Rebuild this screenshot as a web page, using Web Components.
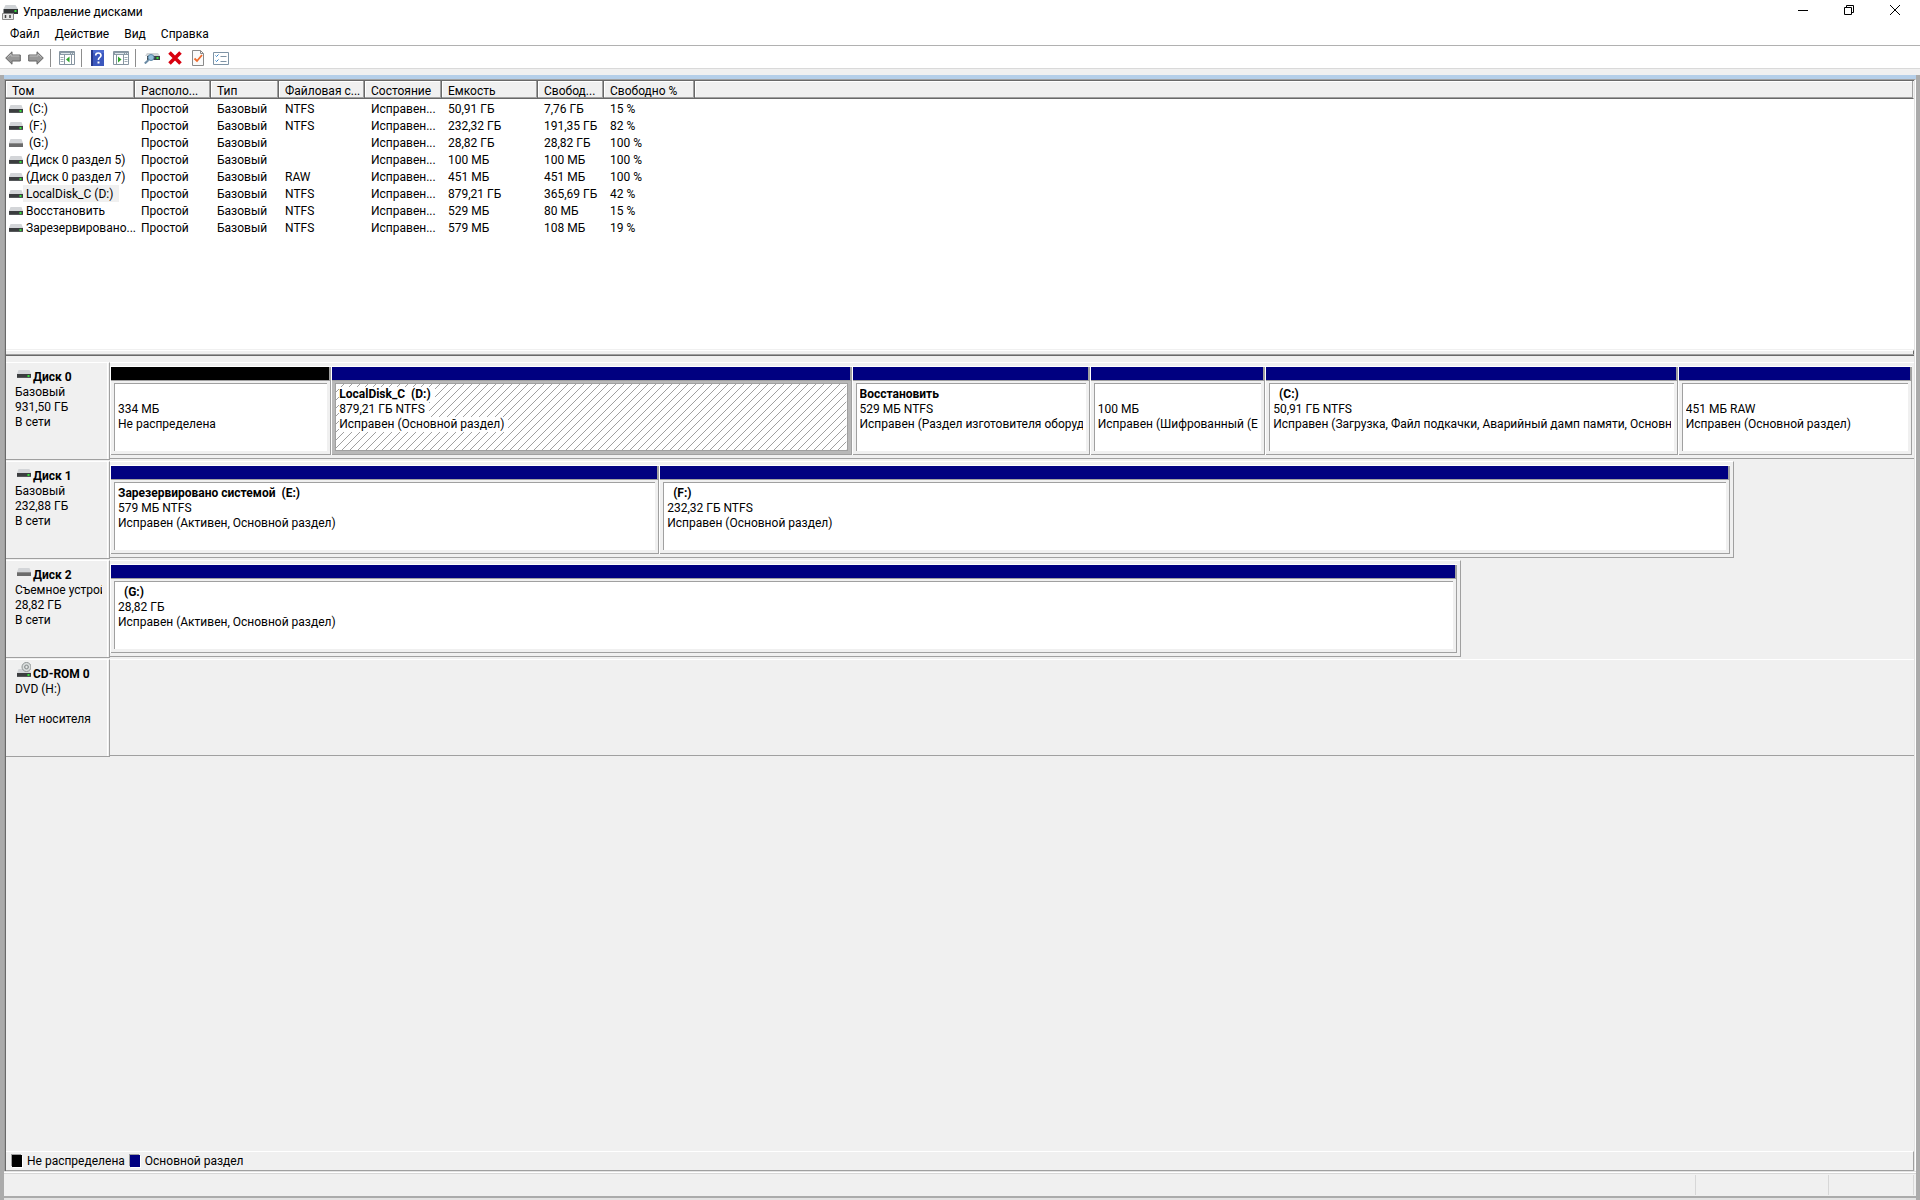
<!DOCTYPE html>
<html lang="ru">
<head>
<meta charset="utf-8">
<title>Управление дисками</title>
<style>
  html, body { margin: 0; height: 100%; }
  body { font: 12px/15px Roboto, "Open Sans", sans-serif; color: #000; background: #f0f0f0; }
</style>
</head>
<body>
<disk-manager></disk-manager>

<script>
const define = (name, html, setup) => {
  const tpl = document.createElement('template');
  tpl.innerHTML = html;
  customElements.define(name, class extends HTMLElement {
    constructor() {
      super();
      this.attachShadow({ mode: 'open' }).append(tpl.content.cloneNode(true));
    }
    connectedCallback() { if (setup) setup.call(this, this.shadowRoot); }
  });
};

/* Drive glyph: kind = hdd | removable | cd */
const driveSvg = kind => `
  <svg width="14" height="${kind === 'cd' ? 15 : 8}" viewBox="0 ${kind === 'cd' ? -7 : 0} 14 ${kind === 'cd' ? 15 : 8}" aria-hidden="true">
    <path d="M1.500 0h11L14 4H0z" fill="#d3d5d8"/>
    ${kind === 'removable'
      ? '<rect y="4" width="14" height="4" fill="#6b6b6b"/><path d="M0 4.500h14" stroke="#8d8d8d"/>'
      : '<rect y="4" width="14" height="4" fill="#3b3d3f"/><path d="M0 7.500h14" stroke="#55585a"/><path d="M10 6h3M11.500 5v2" stroke="#35e03a"/>'}
    ${kind === 'cd' ? '<circle cx="9.500" cy="-2" r="4.500" fill="#dcdfdf" stroke="#8f9494"/><circle cx="9.500" cy="-2" r="2" fill="#b9bdbd" stroke="#909595"/><circle cx="9.500" cy="-2" r=".8" fill="#fff"/>' : ''}
  </svg>`;

define('drive-icon', `<style>:host{display:block;flex:none}svg{display:block}</style><div></div>`,
  function (root) { root.querySelector('div').innerHTML = driveSvg(this.getAttribute('kind') || 'hdd'); });

define('title-bar', `
<style>
  :host { display: flex; align-items: center; height: 24px; background: #fff; padding: 0 2px 0 2px; }
  h1 { font: inherit; margin: 0 auto 0 5px; }
  button { width: 46px; height: 20px; border: 0; background: none; padding: 0; display: grid; place-items: center; align-self: flex-start; }
  svg { display: block; }
</style>
<svg width="16" height="15" viewBox="0 0 16 15" aria-hidden="true">
  <path d="M3.500 0h10L16 4H1.500z" fill="#cfd2d5"/><path d="M1.500 4H16v5H1.500z" fill="#333638"/>
  <path d="M12 6h3M13.500 5v2" stroke="#35e03a"/>
  <path d="M.5 14.500V8.500h11v6z" fill="#e7e7e7" stroke="#888"/><path d="M3.500 10v3M8 10v3" stroke="#444" stroke-width="1.500"/>
</svg>
<h1><slot></slot></h1>
<button aria-label="Свернуть"><svg width="10" height="11"><path d="M0 5.500h10" stroke="#000"/></svg></button>
<button aria-label="Восстановить окно"><svg width="10" height="10" fill="none" stroke="#000"><path d="M.5 2.500h7v7h-7zM2.500 2V.5h7v7H8"/></svg></button>
<button aria-label="Закрыть"><svg width="10" height="10" stroke="#000"><path d="M0 0l10 10M10 0L0 10"/></svg></button>
`);

define('menu-bar', `
<style>
  :host { display: block; background: #fff; border-bottom: 1px solid #b1b1b1; }
  nav { display: flex; height: 21px; align-items: center; padding-left: 3px; }
</style>
<nav><slot></slot></nav>`);

define('menu-item', `
<style>
  :host { display: block; }
  button { font: inherit; color: inherit; border: 0; background: none; padding: 0 8px 0 7px; display: block; }
</style>
<button><slot></slot></button>`);

define('tool-bar', `
<style>
  :host { display: flex; height: 20px; align-items: center; background: #fff; border-bottom: 1px solid #d9d9d9; padding: 2px 0 0 1px; }
  button { width: 23px; height: 20px; border: 0; padding: 0; background: none; display: grid; place-items: center; }
  i { width: 1px; height: 18px; background: #8d8d8d; margin: 0 4px 0 3px; }
  svg { display: block; }
</style>
<button aria-label="Назад"><svg width="16" height="14" viewBox="0 0 16 14"><path d="M.7 7L7 .8V4h8.300v6H7v3.200z" fill="#979797" stroke="#666"/><path d="M2.500 6.500L6 3v2h8.300" fill="none" stroke="#bcbcbc"/></svg></button>
<button aria-label="Вперед"><svg width="16" height="14" viewBox="0 0 16 14"><path d="M15.300 7L9 .8V4H.7v6H9v3.200z" fill="#979797" stroke="#666"/><path d="M13.500 6.500L10 3v2H1.700" fill="none" stroke="#bcbcbc"/></svg></button>
<i></i>
<button aria-label="Показать дерево консоли"><svg width="16" height="14" viewBox="0 0 16 14"><path d="M.5.5h15v13H.5z" fill="#fff" stroke="#8795a1"/><path d="M1 1h14v3H1z" fill="#8b9aa6"/><path d="M2 2.500h9M12 2.500h1M14 2.500h1" stroke="#dfe6eb"/><path d="M5.500 4v9.500M12.500 4v9.500" stroke="#8795a1"/><path d="M1.500 6.500h3M1.500 8.500h3M1.500 10.500h3" stroke="#9daab4"/><path d="M10.500 5.500v6L7 8.500z" fill="#2fa52c"/></svg></button>
<i></i>
<button aria-label="Справка"><svg width="13" height="16" viewBox="0 0 13 16"><path d="M0 0h13v16H0z" fill="#3b57bd"/><path d="M0 0h2v16H0z" fill="#26388c"/><path d="M2 0h11v3H2z" fill="#4d6bd0"/><path d="M4.700 5.500Q4.700 3 7.300 3T10 5.400Q10 6.700 8.500 7.600Q7.400 8.300 7.400 10" fill="none" stroke="#fff" stroke-width="1.600"/><path d="M6.500 11.500h2v2h-2z" fill="#fff"/></svg></button>
<button aria-label="Показать область действий"><svg width="16" height="14" viewBox="0 0 16 14"><path d="M.5.5h15v13H.5z" fill="#fff" stroke="#8795a1"/><path d="M1 1h14v3H1z" fill="#8b9aa6"/><path d="M2 2.500h9M12 2.500h1M14 2.500h1" stroke="#dfe6eb"/><path d="M3.500 4v9.500M10.500 4v9.500" stroke="#8795a1"/><path d="M11.500 6.500h3M11.500 8.500h3M11.500 10.500h3" stroke="#9daab4"/><path d="M5 5.500v6l3.500-3z" fill="#2fa52c"/></svg></button>
<i></i>
<button aria-label="Обновить"><svg width="16" height="12" viewBox="0 0 16 12"><path d="M3 1h11l2 3H1z" fill="#cfd2d5"/><path d="M3 4h13v4H3z" fill="#3a4043"/><path d="M12 6h3M13.500 5v2" stroke="#35e03a"/><path d="M.8 11.500L4.500 8" stroke="#6b8ba5" stroke-width="2"/><circle cx="7" cy="5.500" r="3" fill="#93bedb" stroke="#5d87a6"/></svg></button>
<button aria-label="Удалить"><svg width="14" height="14" viewBox="0 0 14 14"><path d="M1.500 1.500L12.500 12.500M12.500 1.500L1.500 12.500" stroke="#d8000f" stroke-width="3.600"/></svg></button>
<button aria-label="Свойства"><svg width="12" height="16" viewBox="0 0 12 16"><path d="M.5.5h8l3 3v12H.5z" fill="#fafafa" stroke="#8a8a8a"/><path d="M8.500.5v3h3" fill="none" stroke="#8a8a8a"/><path d="M2.500 8.500L5 11l5-6" fill="none" stroke="#ee6a2c" stroke-width="1.800"/></svg></button>
<button aria-label="Параметры"><svg width="16" height="13" viewBox="0 0 16 13"><path d="M.5.5h15v12H.5z" fill="#fff" stroke="#7e93a5"/><path d="M2.500 3.500l1 1 2-2M2.500 8.500l1 1 2-2" fill="none" stroke="#2f7fc4"/><path d="M7.500 4.500h6M7.500 9.500h6" stroke="#7e93a5"/></svg></button>
`);

define('volume-list', `
<style>
  :host { display: block; height: 268px; background: #fff; border-top: 1px solid #696969; overflow: hidden; }
  table { border-collapse: separate; border-spacing: 0; table-layout: fixed; width: 100%; }
  th, td { font-weight: 400; text-align: left; white-space: nowrap; overflow: hidden; vertical-align: top; }
  th { background: #f0f0f0; padding: 4px 0 0 6px; line-height: 13px; border-right: 1px solid #696969; border-bottom: 1px solid #696969; box-shadow: inset -1px -1px #a0a0a0, inset 1px 1px #fff; }
  th:last-child { border-right-color: #f0f0f0; }
  td { padding: 2px 0 0 6px; line-height: 15px; }
  td:first-child { padding: 0 0 0 3px; overflow: visible; }
  tbody::before { content: ""; display: table-row; height: 1px; }
  .vol { display: flex; align-items: center; }
  .vol span { padding: 2px 6px 0 3px; white-space: pre; line-height: 15px; }
  .sel span { background: #f0f0f0; }
</style>
<table>
  <colgroup><col style="width:129px"><col style="width:76px"><col style="width:68px"><col style="width:86px"><col style="width:77px"><col style="width:96px"><col style="width:66px"><col style="width:91px"><col></colgroup>
  <thead><tr><th>Том</th><th>Располо...</th><th>Тип</th><th>Файловая с...</th><th>Состояние</th><th>Емкость</th><th>Свобод...</th><th>Свободно %</th><th></th></tr></thead>
  <tbody></tbody>
</table>`, function (root) {
  const rows = [
    [' (C:)', 'NTFS', '50,91 ГБ', '7,76 ГБ', '15 %'],
    [' (F:)', 'NTFS', '232,32 ГБ', '191,35 ГБ', '82 %'],
    [' (G:)', '', '28,82 ГБ', '28,82 ГБ', '100 %', 'removable'],
    ['(Диск 0 раздел 5)', '', '100 МБ', '100 МБ', '100 %'],
    ['(Диск 0 раздел 7)', 'RAW', '451 МБ', '451 МБ', '100 %'],
    ['LocalDisk_C (D:)', 'NTFS', '879,21 ГБ', '365,69 ГБ', '42 %', 'hdd', true],
    ['Восстановить', 'NTFS', '529 МБ', '80 МБ', '15 %'],
    ['Зарезервировано...', 'NTFS', '579 МБ', '108 МБ', '19 %'],
  ];
  root.querySelector('tbody').innerHTML = rows.map(([name, fs, cap, free, pct, kind, sel]) =>
    `<tr><td><div class="vol${sel ? ' sel' : ''}"><drive-icon kind="${kind || 'hdd'}"></drive-icon><span>${name}</span></div></td>
     <td>Простой</td><td>Базовый</td><td>${fs}</td><td>Исправен...</td><td>${cap}</td><td>${free}</td><td>${pct}</td><td></td></tr>`).join('');
});

define('disk-row', `
<style>
  :host { display: flex; height: 99px; box-sizing: border-box; }
  .label { width: 104px; height: 98px; box-sizing: border-box; flex: none; border-top: 1px solid #fff; border-right: 1px solid #a0a0a0; border-bottom: 1px solid #a0a0a0; padding: 7px 7px 0 9px; box-shadow: inset -1px 0 #f0f0f0, inset -2px 0 #fff; white-space: nowrap; }
  .info { overflow: hidden; }
  .name { display: flex; gap: 2px; padding-left: 2px; font-weight: 700; height: 15px; }
  .icon { flex: none; }
  .icon svg { display: block; }
  :host([kind="cd"]) .icon { margin-top: -5px; }
  .track { flex: 1; min-width: 0; height: 97px; }
  .strip { width: var(--span, 100%); height: 97px; box-sizing: border-box; border-top: 1px solid #fff; border-bottom: 1px solid #a0a0a0; border-right: 1px solid #a0a0a0; display: flex; padding: 3px 3px 3px 0; }
  :host([full]) .strip { border-right: 0; padding-right: 2px; }
</style>
<div class="label">
  <div class="name"><span class="icon"></span><slot name="name"></slot></div>
  <div class="info"><slot name="info"></slot></div>
</div>
<div class="track"><div class="strip"><slot></slot></div></div>`, function (root) {
  root.querySelector('.icon').innerHTML = driveSvg(this.getAttribute('kind') || 'hdd');
});

define('disk-partition', `
<style>
  :host { flex: var(--share) 1 0; min-width: 0; display: flex; flex-direction: column; box-sizing: border-box; border-left: 1px solid #fff; border-top: 1px solid #fff; --bar: #000080; --face: #f0f0f0; }
  :host([free]) { --bar: #000; }
  :host([selected]) { --face: #b9b9b9; }
  .bar { height: 13px; background: var(--bar); border-right: 2px solid #a0a0a0; border-bottom: 1px solid #a0a0a0; }
  .frame { flex: 1; background: var(--face); border-right: 1px solid #a0a0a0; border-bottom: 1px solid #a0a0a0; padding: 2px 3px 3px 3px; display: flex; }
  .cell { flex: 1; min-width: 0; position: relative; background: #fff; border-left: 1px solid #a0a0a0; border-top: 1px solid #a0a0a0; padding: 3px 3px 0 3px; }
  :host([selected]) .cell { border: 1px solid #a0a0a0; }
  .text { position: relative; overflow: hidden; white-space: pre; }
  svg { display: none; position: absolute; inset: 0; width: 100%; height: 100%; }
  :host([selected]) svg { display: block; }
  ::slotted(*) { display: block; width: fit-content; min-height: 15px; }
  :host([selected]) ::slotted(*) { background: #fff; padding-right: 4px; }
  ::slotted(b) { font-weight: 700; }
</style>
<div class="bar"></div>
<div class="frame"><div class="cell">
  <svg aria-hidden="true"><defs><pattern id="h" width="8" height="8" patternUnits="userSpaceOnUse"><path d="M-1 9L9 -1" stroke="#a0a0a0" shape-rendering="crispEdges"/></pattern></defs><rect width="100%" height="100%" fill="url(#h)"/></svg>
  <div class="text"><slot></slot></div>
</div></div>`);

define('legend-bar', `
<style>
  :host { display: flex; align-items: center; height: 18px; border-top: 1px solid #fff; border-bottom: 1px solid #a0a0a0; border-right: 1px solid #a0a0a0; padding-left: 6px; gap: 5px; }
  i { width: 10px; height: 12px; background: #000; box-shadow: -1px -1px #a0a0a0, 1px 1px #fff; }
  i.main { background: #000080; }
</style>
<i></i><span>Не распределена</span><i class="main"></i><span>Основной раздел</span>`);

define('status-bar', `
<style>
  :host { display: flex; height: 23px; box-sizing: border-box; padding: 1px 2px 1px 0; border-top: 1px solid #d7d7d7; background: #f0f0f0; }
  div { border-right: 1px solid #d7d7d7; box-sizing: border-box; }
  .a { flex: 1; } .b { width: 133px; } .c { width: 85px; }
</style>
<div class="a"></div><div class="b"></div><div class="c"></div>`);

define('disk-manager', `
<style>
  :host { display: flex; flex-direction: column; min-height: 100vh; }
  .gap { height: 6px; background: #f0f0f0; }
  .frame { flex: 1; display: flex; flex-direction: column; border: 4px solid #ababab; border-top: 0; border-bottom: 0; }
  .band { height: 4px; background: #b5cfe9; }
  .view { flex: 1; display: flex; flex-direction: column; border-left: 1px solid #a0a0a0; border-right: 1px solid #fff; border-top: 1px solid #a0a0a0; box-shadow: inset -1px 0 #e3e3e3, inset 1px 0 #696969; padding: 0 1px; }
  .split { height: 12px; padding-top: 1px; }
  .split::before { content: ""; display: block; height: 3px; border-top: 1px solid #fff; border-right: 1px solid #696969; }
  .split i { display: block; height: 1px; background: #a0a0a0; border-bottom: 1px solid #696969; }
  .space { flex: 1; }
  .edge { height: 2px; background: #fff; border-top: 1px solid #e3e3e3; box-sizing: border-box; }
  .foot { height: 4px; background: #e3e3e3; border-top: 2px solid #ababab; box-sizing: border-box; }
</style>
<title-bar>Управление дисками</title-bar>
<menu-bar><menu-item>Файл</menu-item><menu-item>Действие</menu-item><menu-item>Вид</menu-item><menu-item>Справка</menu-item></menu-bar>
<tool-bar></tool-bar>
<div class="gap"></div>
<main class="frame">
  <div class="band"></div>
  <div class="view">
    <volume-list></volume-list>
    <div class="split"><i></i></div>
    <disk-row full>
      <span slot="name">Диск 0</span><span slot="info">Базовый<br>931,50 ГБ<br>В сети</span>
      <disk-partition free style="--share:221"><b></b><span>334 МБ</span><span>Не распределена</span></disk-partition>
      <disk-partition selected style="--share:521"><b>LocalDisk_C  (D:)</b><span>879,21 ГБ NTFS</span><span>Исправен (Основной раздел)</span></disk-partition>
      <disk-partition style="--share:238"><b>Восстановить</b><span>529 МБ NTFS</span><span>Исправен (Раздел изготовителя оборудо</span></disk-partition>
      <disk-partition style="--share:175"><b></b><span>100 МБ</span><span>Исправен (Шифрованный (EF</span></disk-partition>
      <disk-partition style="--share:413"><b>  (C:)</b><span>50,91 ГБ NTFS</span><span>Исправен (Загрузка, Файл подкачки, Аварийный дамп памяти, Основно</span></disk-partition>
      <disk-partition style="--share:234"><b></b><span>451 МБ RAW</span><span>Исправен (Основной раздел)</span></disk-partition>
    </disk-row>
    <disk-row style="--span:90%">
      <span slot="name">Диск 1</span><span slot="info">Базовый<br>232,88 ГБ<br>В сети</span>
      <disk-partition style="--share:549"><b>Зарезервировано системой  (E:)</b><span>579 МБ NTFS</span><span>Исправен (Активен, Основной раздел)</span></disk-partition>
      <disk-partition style="--share:1071"><b>  (F:)</b><span>232,32 ГБ NTFS</span><span>Исправен (Основной раздел)</span></disk-partition>
    </disk-row>
    <disk-row kind="removable" style="--span:74.9%">
      <span slot="name">Диск 2</span><span slot="info">Съемное устрой<br>28,82 ГБ<br>В сети</span>
      <disk-partition style="--share:1"><b>  (G:)</b><span>28,82 ГБ</span><span>Исправен (Активен, Основной раздел)</span></disk-partition>
    </disk-row>
    <disk-row kind="cd" full>
      <span slot="name">CD-ROM 0</span><span slot="info">DVD (H:)<br><br>Нет носителя</span>
    </disk-row>
    <div class="space"></div>
    <legend-bar></legend-bar>
  </div>
  <div class="edge"></div>
  <status-bar></status-bar>
  <div class="foot"></div>
</main>
`);
</script>
</body>
</html>
